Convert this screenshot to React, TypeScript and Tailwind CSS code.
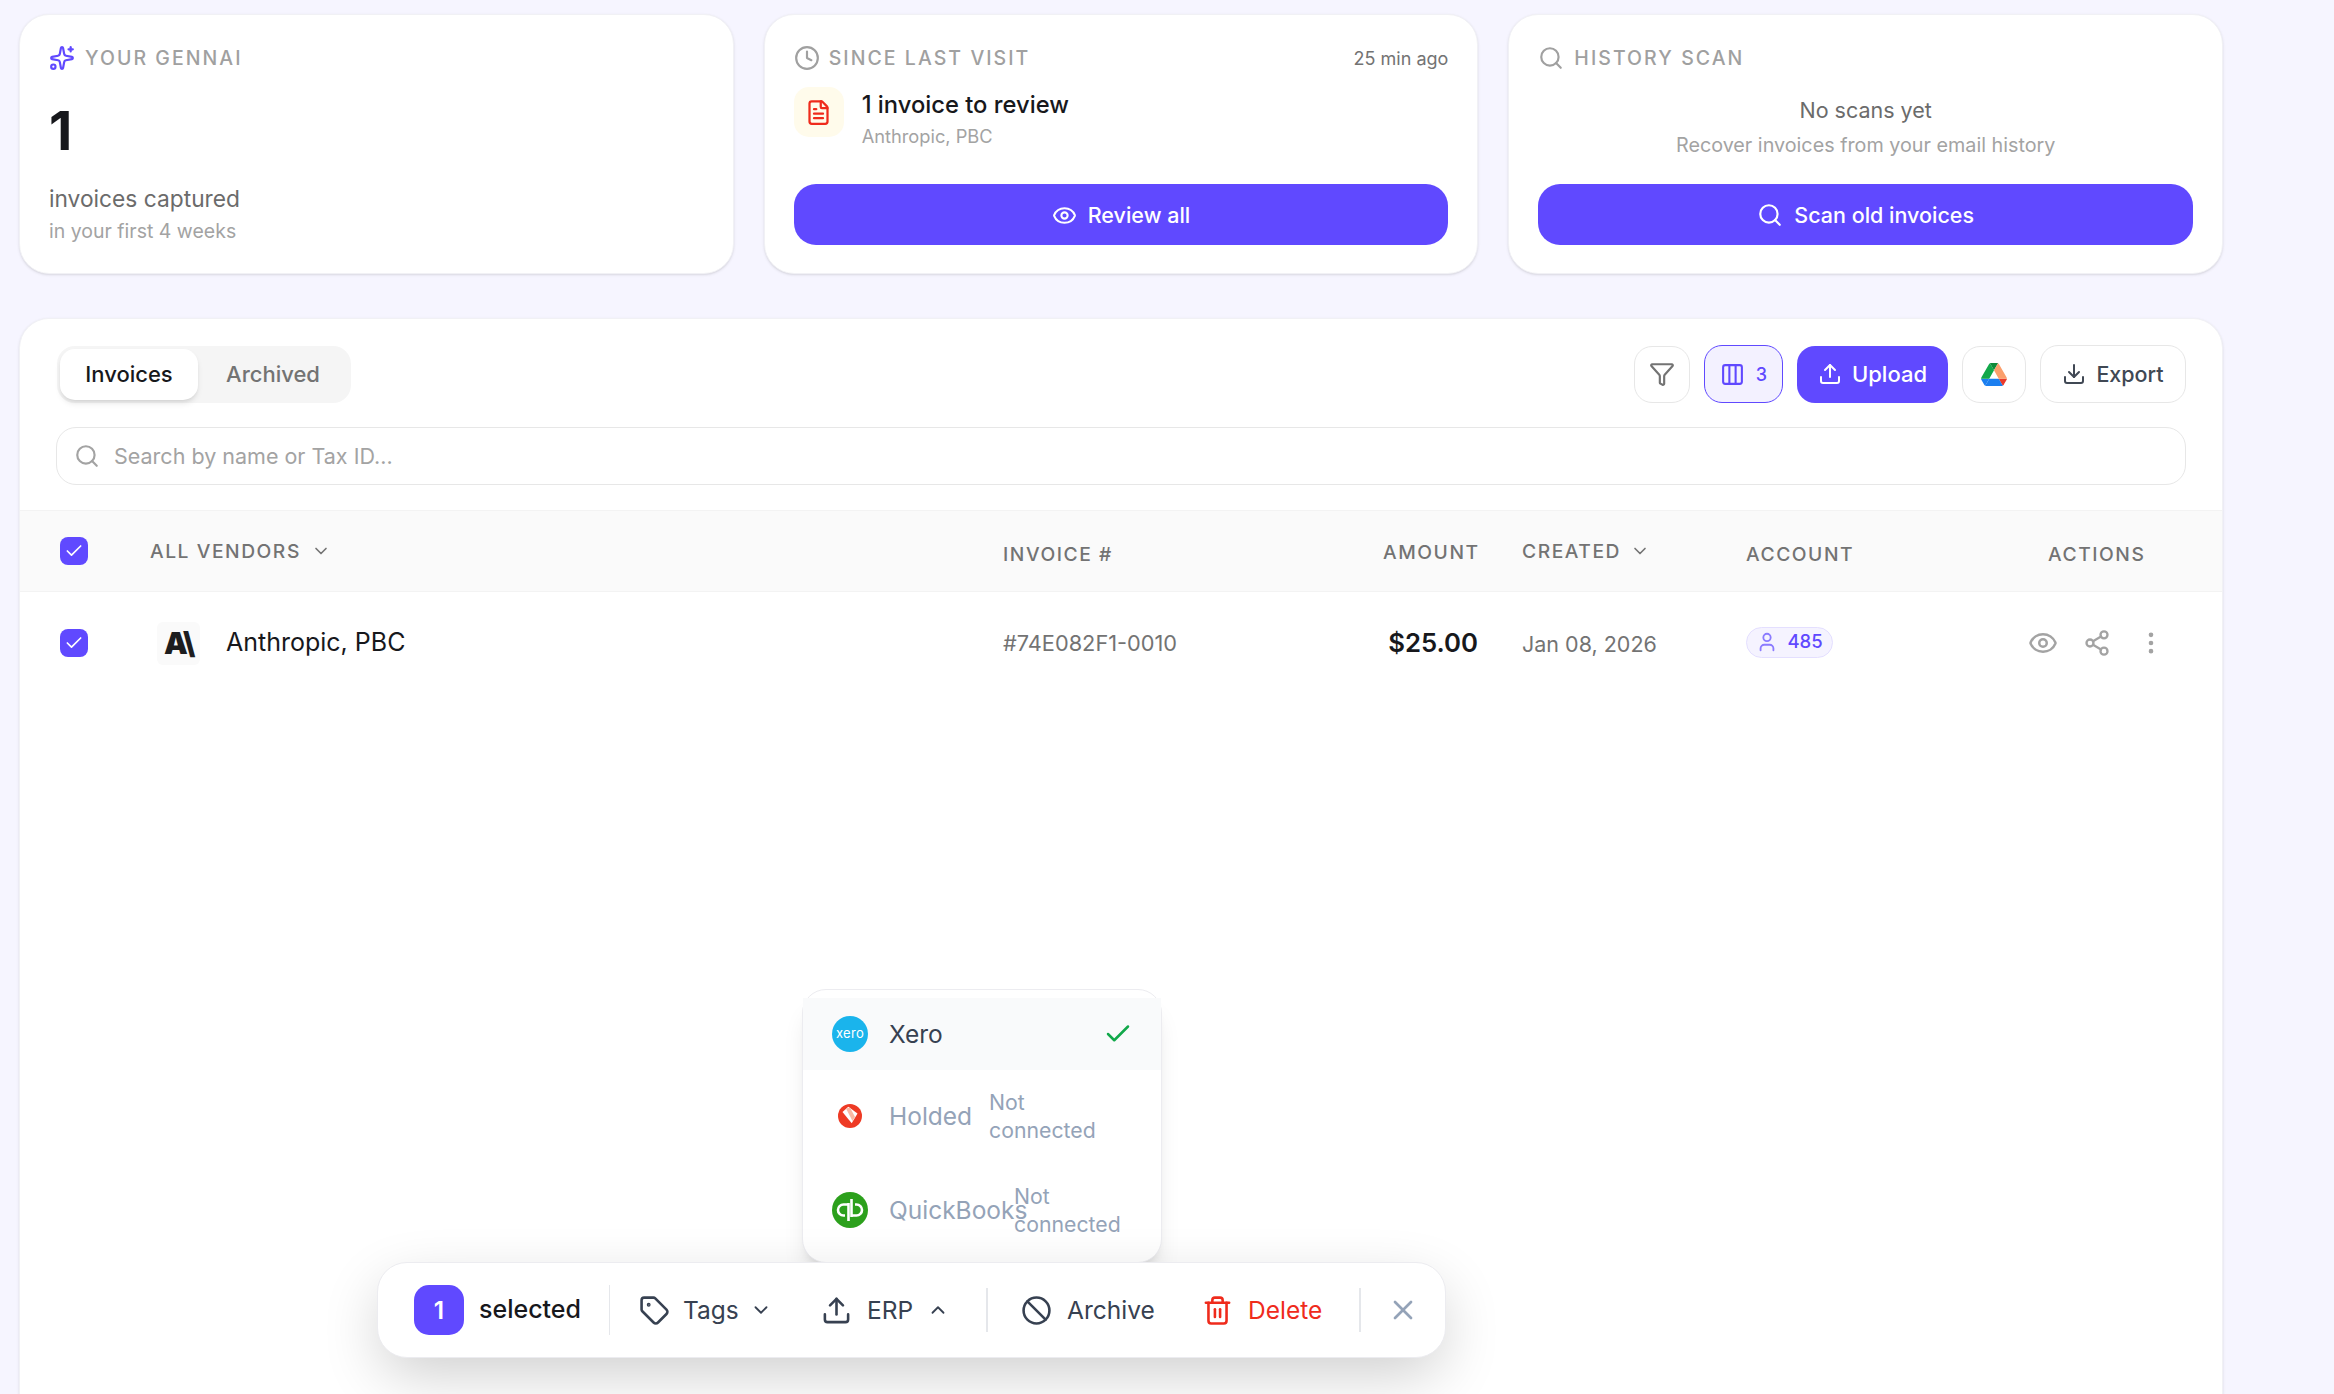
import {
  Ban,
  Check,
  ChevronDown,
  ChevronUp,
  Clock,
  Columns3,
  Download,
  EllipsisVertical,
  Eye,
  FileText,
  Funnel,
  Search,
  Share2,
  Sparkles,
  Tag,
  Trash2,
  Upload,
  User,
  X,
} from "lucide-react"

const rowGrid = "grid grid-cols-[90px_853px_380px_95px_268px_302px_1fr] items-center pl-[40px]"
const headCell = "text-[19.25px] font-medium tracking-[0.08em] text-[#737373]"

function CardLabel({ children }: { children: string }) {
  return <span className="mt-[2px] text-[19.5px] font-medium tracking-[0.105em] text-[#a0a0a0]">{children}</span>
}

function DriveLogo() {
  return (
    <svg viewBox="0 0 87.3 78" className="h-[23px] w-[26px]">
      <path d="m6.6 66.85 3.85 6.65c.8 1.4 1.95 2.5 3.3 3.3l13.75-23.8h-27.5c0 1.55.4 3.1 1.2 4.5z" fill="#1b7ff0" />
      <path d="m43.65 25-13.75-23.8c-1.35.8-2.5 1.9-3.3 3.3l-25.4 44a9.06 9.06 0 0 0 -1.2 4.5h27.5z" fill="#12a84a" />
      <path d="m73.55 76.8c1.35-.8 2.5-1.9 3.3-3.3l1.6-2.75 7.65-13.25c.8-1.4 1.2-2.95 1.2-4.5h-27.502l5.852 11.5z" fill="#ea3a2b" />
      <path d="m43.65 25 13.75-23.8c-1.35-.8-2.9-1.2-4.5-1.2h-18.5c-1.6 0-3.15.45-4.5 1.2z" fill="#0f8a3a" />
      <path d="m59.8 53h-32.3l-13.75 23.8c1.35.8 2.9 1.2 4.5 1.2h50.8c1.6 0 3.15-.45 4.5-1.2z" fill="#1b7ff0" />
      <path d="m73.4 26.5-12.7-22c-.8-1.4-1.95-2.5-3.3-3.3l-13.75 23.8 16.15 28h27.45c0-1.55-.4-3.1-1.2-4.5z" fill="#fb9f6c" />
    </svg>
  )
}

function HoldedLogo() {
  return (
    <svg viewBox="0 0 24 24" className="h-[24px] w-[24px]">
      <circle cx="12" cy="12" r="12" fill="#ee3a24" />
      <path d="M4.5 7.9 10.3 2.7 19.5 9.6 13.7 19.2z" fill="#fff" />
      <path d="M8 4.5 12 3.5 17 13 14.5 17z" fill="#f9b9a4" />
    </svg>
  )
}

function QuickBooksLogo() {
  return (
    <svg viewBox="0 0 36 36" className="h-[36px] w-[36px]">
      <circle cx="18" cy="18" r="18" fill="#2ca01c" />
      <path d="M16.5 12.5h-5a5.5 5.5 0 0 0 0 11h1.5M16.5 11v18" fill="none" stroke="#fff" strokeWidth="2.6" />
      <path d="M19.5 23.5h5a5.5 5.5 0 0 0 0-11H23M19.5 7v18" fill="none" stroke="#fff" strokeWidth="2.6" />
    </svg>
  )
}

export default function App() {
  return (
    <div className="relative flex h-screen flex-col overflow-hidden bg-[#f6f5ff] pt-[14px] pl-[19px] pr-[111px] font-['Inter',sans-serif]">
      <div className="grid grid-cols-3 gap-[30px]">
        <div className="flex h-[260px] flex-col rounded-[30px] border border-[#f1f1f5] bg-white px-[29px] pt-[29px] shadow-sm">
          <div className="flex h-[28px] items-center gap-[10px]">
            <Sparkles size={26} className="text-[#6049ff]" />
            <CardLabel>YOUR GENNAI</CardLabel>
          </div>
          <div className="mt-[32px] text-[54px] leading-[54px] font-bold text-[#17181c]">1</div>
          <div className="mt-[25px] text-[22.75px] leading-[32px] text-[#6b6b6b]">invoices captured</div>
          <div className="mt-[2px] text-[19.5px] leading-[28px] text-[#a3a3a3]">in your first 4 weeks</div>
        </div>

        <div className="flex h-[260px] flex-col rounded-[30px] border border-[#f1f1f5] bg-white px-[29px] pt-[29px] pb-[28px] shadow-sm">
          <div className="flex h-[28px] items-center justify-between">
            <div className="flex items-center gap-[9px]">
              <Clock size={26} className="text-[#a0a0a0]" />
              <CardLabel>SINCE LAST VISIT</CardLabel>
            </div>
            <span className="text-[18px] text-[#737373]">25 min ago</span>
          </div>
          <div className="mt-[15px] flex gap-[18px]">
            <div className="flex h-[50px] w-[50px] items-center justify-center rounded-[15px] bg-[#fffbeb]">
              <FileText size={27} className="text-[#ef2b1c]" />
            </div>
            <div>
              <div className="mt-[2px] text-[23.75px] leading-[32px] font-medium text-[#17181c]">1 invoice to review</div>
              <div className="mt-[1px] text-[18.25px] leading-[28px] text-[#a3a3a3]">Anthropic, PBC</div>
            </div>
          </div>
          <button className="mt-auto flex h-[61px] items-center justify-center gap-[11px] rounded-[22px] bg-[#6049ff] pt-[1px] text-[21.5px] font-medium text-white">
            <Eye size={25} />
            Review all
          </button>
        </div>

        <div className="flex h-[260px] flex-col rounded-[30px] border border-[#f1f1f5] bg-white px-[29px] pt-[29px] pb-[28px] shadow-sm">
          <div className="flex h-[28px] items-center gap-[10px]">
            <Search size={26} className="text-[#a0a0a0]" />
            <CardLabel>HISTORY SCAN</CardLabel>
          </div>
          <div className="mt-[22px] text-center text-[21.5px] leading-[32px] text-[#6b6b6b]">No scans yet</div>
          <div className="mt-[5px] text-center text-[19.75px] leading-[28px] text-[#a3a3a3]">Recover invoices from your email history</div>
          <button className="mt-auto flex h-[61px] items-center justify-center gap-[11px] rounded-[22px] bg-[#6049ff] pt-[1px] text-[21.5px] font-medium text-white">
            <Search size={26} />
            Scan old invoices
          </button>
        </div>
      </div>

      <div className="mt-[44px] flex-1 rounded-t-[30px] border border-b-0 border-[#f1f1f5] bg-white pt-[26px] shadow-sm">
        <div className="flex items-center justify-between pl-[37px] pr-[36px]">
          <div className="flex h-[57px] items-center rounded-[18px] bg-[#f5f5f5] p-[3px]">
            <div className="flex h-[51px] w-[138px] items-center justify-center rounded-[15px] bg-white text-[22px] font-medium text-[#17181c] shadow-md">
              Invoices
            </div>
            <div className="flex h-[51px] w-[150px] items-center justify-center text-[22px] font-medium text-[#737373]">
              Archived
            </div>
          </div>
          <div className="flex items-center gap-[14px]">
            <button className="flex h-[57px] w-[56px] items-center justify-center rounded-[18px] border border-[#e7e7e7] bg-white">
              <Funnel size={26} className="text-[#737373]" />
            </button>
            <button className="flex h-[58px] w-[79px] items-center justify-center gap-[11px] rounded-[18px] border border-[#6049ff] bg-[#f3f1ff] text-[18px] font-medium text-[#6049ff]">
              <Columns3 size={25} />
              3
            </button>
            <button className="flex h-[57px] w-[151px] items-center justify-center gap-[10px] rounded-[18px] bg-[#6049ff] text-[22px] font-medium text-white">
              <Upload size={24} />
              Upload
            </button>
            <button className="flex h-[57px] w-[64px] items-center justify-center rounded-[18px] border border-[#e7e7e7] bg-white">
              <DriveLogo />
            </button>
            <button className="flex h-[58px] w-[146px] items-center justify-center gap-[10px] rounded-[18px] border border-[#e7e7e7] bg-white text-[21.5px] font-medium text-[#404854]">
              <Download size={24} />
              Export
            </button>
          </div>
        </div>

        <div className="mx-[36px] mt-[24px] flex h-[58px] items-center gap-[14px] rounded-[20px] border border-[#e7e7e7] bg-white pl-[17px] text-[21.5px] text-[#a3a3a3]">
          <Search size={26} />
          Search by name or Tax ID...
        </div>

        <div className={`${rowGrid} mt-[25px] h-[82px] border-y border-[#f3f3f3] bg-[#fafafa]`}>
          <span className="flex h-[28px] w-[28px] items-center justify-center rounded-[8px] bg-[#6049ff]">
            <Check size={20} className="text-white" />
          </span>
          <div className={`${headCell} flex items-center gap-[10px]`}>
            ALL VENDORS
            <ChevronDown size={20} />
          </div>
          <div className={`${headCell} pt-[6px]`}>INVOICE #</div>
          <div className={`${headCell} pt-[3px] pr-[2px] text-right`}>AMOUNT</div>
          <div className={`${headCell} flex items-center gap-[9px] pl-[44px]`}>
            CREATED
            <ChevronDown size={20} />
          </div>
          <div className={`${headCell} pt-[6px]`}>ACCOUNT</div>
          <div className={`${headCell} pt-[6px]`}>ACTIONS</div>
        </div>

        <div className={`${rowGrid} h-[102px]`}>
          <span className="flex h-[28px] w-[28px] items-center justify-center rounded-[8px] bg-[#6049ff]">
            <Check size={20} className="text-white" />
          </span>
          <div className="flex items-center gap-[26px] pl-[7px]">
            <span className="flex h-[43px] w-[43px] items-center justify-center rounded-[6px] bg-[#fafafa] text-[30px] leading-none font-black tracking-[-0.08em] text-[#1d1d1f]">
              A\
            </span>
            <span className="text-[25px] text-[#17181c]">Anthropic, PBC</span>
          </div>
          <div className="text-[21.75px] text-[#737373]">#74E082F1-0010</div>
          <div className="text-right text-[25.75px] font-semibold text-[#17181c]">$25.00</div>
          <div className="pt-[3px] pl-[44px] text-[21.5px] text-[#737373]">Jan 08, 2026</div>
          <div>
            <span className="inline-flex h-[31px] w-[87px] items-center justify-center gap-[9px] rounded-full border border-[#e4dfff] bg-[#f5f3ff] text-[18.5px] font-medium text-[#6049ff]">
              <User size={22} className="text-[#8b7bff]" />
              485
            </span>
          </div>
          <div className="flex items-center gap-[25px] text-[#a3a3a3]">
            <Eye size={30} className="ml-[-20px]" />
            <Share2 size={28} />
            <EllipsisVertical size={28} className="ml-[1px]" />
          </div>
        </div>
      </div>

      <div className="absolute top-[989px] left-[802px] h-[274px] w-[360px] rounded-[24px] border border-[#ececf0] bg-white pt-[8px] shadow-xl">
        <div className="flex h-[72px] items-center bg-[#f9fafb] pl-[29px]">
          <span className="flex h-[36px] w-[36px] items-center justify-center rounded-full bg-[#1ab4ec] text-[13px] tracking-[0.02em] text-white">
            xero
          </span>
          <span className="ml-[21px] text-[24.5px] text-[#374151]">Xero</span>
          <Check size={30} className="ml-[160px] text-[#12a84a]" />
        </div>
        <div className="mt-[11px] flex h-[70px] items-center pl-[29px]">
          <span className="flex w-[36px] justify-center">
            <HoldedLogo />
          </span>
          <span className="ml-[21px] w-[100px] text-[24.5px] text-[#94a3b8]">Holded</span>
          <span className="w-[110px] text-[21.25px] leading-[28.5px] text-[#94a3b8]">Not connected</span>
        </div>
        <div className="mt-[29px] flex h-[60px] items-center pl-[29px]">
          <QuickBooksLogo />
          <span className="ml-[21px] w-[125px] text-[24.5px] whitespace-nowrap text-[#94a3b8]">QuickBooks</span>
          <span className="w-[110px] text-[21.25px] leading-[28.5px] text-[#94a3b8]">Not connected</span>
        </div>
      </div>

      <div className="absolute top-[1262px] left-[377px] flex h-[96px] w-[1069px] items-center rounded-[30px] border border-[#ececf0] bg-white pl-[36px] text-[24.5px] text-[#374151] shadow-[0_20px_60px_-5px_rgba(0,0,0,0.2)]">
        <span className="flex h-[50px] w-[50px] items-center justify-center rounded-[15px] bg-[#6049ff] font-semibold text-white">1</span>
        <span className="ml-[15px] w-[101px] text-[25px] font-medium text-[#17181c]">selected</span>
        <span className="ml-[29px] h-[50px] w-px bg-[#e5e7eb]" />
        <Tag size={31} className="ml-[29px]" />
        <span className="ml-[13px] w-[54px]">Tags</span>
        <ChevronDown size={22} className="ml-[13px]" />
        <Upload size={31} className="ml-[49px]" />
        <span className="ml-[15px] w-[46px]">ERP</span>
        <ChevronUp size={22} className="ml-[14px]" />
        <span className="ml-[37px] h-[44px] w-[2px] bg-[#e5e7eb]" />
        <Ban size={31} className="ml-[33px]" />
        <span className="ml-[15px] w-[87px]">Archive</span>
        <Trash2 size={31} className="ml-[48px] text-[#ef2b1c]" />
        <span className="ml-[15px] w-[74px] text-[#ef2b1c]">Delete</span>
        <span className="ml-[37px] h-[44px] w-[2px] bg-[#e5e7eb]" />
        <X size={32} className="ml-[26px] text-[#94a3b8]" />
      </div>
    </div>
  )
}
